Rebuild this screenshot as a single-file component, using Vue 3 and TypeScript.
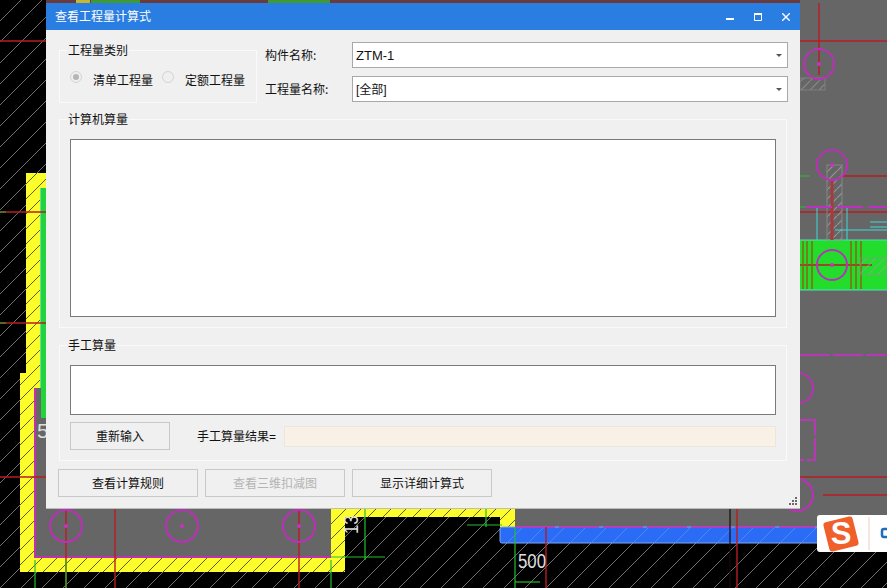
<template>
  <div class="screen">
    <svg class="cad" width="887" height="588" viewBox="0 0 887 588">
      <defs>
        <pattern id="hatch" width="21" height="21" patternUnits="userSpaceOnUse">
          <path d="M-2 23 L23 -2 M-2 2 L2 -2 M19 23 L23 19" stroke="#8c8c8c" stroke-width="0.8" />
        </pattern>
        <pattern id="wallHatch" width="15" height="15" patternUnits="userSpaceOnUse">
          <path d="M-2 17 L17 -2" stroke="#5f5d18" stroke-width="1" />
        </pattern>
        <pattern id="greyHatch" width="9" height="9" patternUnits="userSpaceOnUse">
          <path d="M-2 11 L11 -2" stroke="#a0a0a0" stroke-width="1.2" />
        </pattern>
        <pattern id="blueHatch" width="21" height="21" patternUnits="userSpaceOnUse">
          <path d="M-2 23 L23 -2" stroke="#5a8cf0" stroke-width="0.8" />
        </pattern>
      </defs>

      <rect width="887" height="588" fill="#000" />
      <rect width="887" height="588" fill="url(#hatch)" />

      <!-- grey floor areas -->
      <rect x="35" y="388" width="300" height="170" fill="#666" />
      <rect x="515" y="500" width="372" height="28" fill="#666" />
      <rect x="790" y="0" width="97" height="528" fill="#666" />

      <!-- top strip above the dialog -->
      <rect x="46" y="0" width="754" height="3" fill="#6b3a3a" />
      <rect x="76" y="0" width="14" height="3" fill="#c8b830" />
      <rect x="91" y="0" width="49" height="3" fill="#3f9a34" />
      <rect x="268" y="0" width="62" height="3" fill="#3f9a34" />

      <!-- yellow walls -->
      <path
        v-for="wall in walls"
        :key="wall"
        :d="wall"
        fill="#fdfd2c"
      />
      <path v-for="wall in walls" :key="wall + 'h'" :d="wall" fill="url(#wallHatch)" />
      <path d="M35 388V557H331" fill="none" stroke="#c030b0" stroke-width="2" />

      <!-- green and blue blocks -->
      <rect x="41" y="188" width="9" height="230" fill="#22d43a" />
      <path d="M40.5 188V388" stroke="#60e0a0" />
      <rect x="800" y="240" width="87" height="50" fill="#22dd2c" />
      <path d="M800 240H887M800 290H887" stroke="#4de0c0" />
      <rect x="500" y="527" width="330" height="16" rx="2" fill="#2a6cf5" stroke="#7fa8f0" />
      <rect x="501" y="528" width="328" height="14" fill="url(#blueHatch)" />
      <path d="M515 527H815" stroke="#b040c0" stroke-width="2" stroke-dasharray="40 4" />

      <!-- axis lines -->
      <path
        v-for="line in redLines"
        :key="line"
        :d="line"
        fill="none"
        stroke="#b81c24"
        stroke-width="1.4"
      />
      <path
        v-for="line in greenLines"
        :key="line"
        :d="line"
        fill="none"
        stroke="#22c02c"
        stroke-width="1.2"
      />
      <path d="M730 508V588" stroke="#1a0a0a" stroke-width="1.2" />
      <rect x="827" y="165" width="15" height="75" fill="url(#greyHatch)" stroke="#909090" opacity="0.8" />
      <path d="M832 180V240" stroke="#a83a3a" stroke-width="3" />
      <path d="M817 206V240M847 206V240M835 230H887M870 222H887M870 227H887" stroke="#3cd8d8" stroke-width="1" fill="none" />
      <path d="M806 207H887" stroke="#c030c0" stroke-width="2" stroke-dasharray="26 5" />
      <path d="M803 241V289M807 241V289M812 241V289M851 241V289M856 241V289M861 241V289" stroke="#8f5f10" stroke-width="1.4" />
      <rect x="800" y="78" width="25" height="12" fill="url(#greyHatch)" stroke="#909090" opacity="0.6" />
      <rect x="860" y="258" width="27" height="17" fill="url(#greyHatch)" stroke="#909090" opacity="0.6" />

      <!-- column circles -->
      <g v-for="c in columns" :key="c.x + '-' + c.y">
        <circle :cx="c.x" :cy="c.y" :r="c.r" fill="none" stroke="#bb30b8" stroke-width="2" />
        <circle :cx="c.x" :cy="c.y" r="2" fill="#cc30c0" />
      </g>
      <path d="M800 355H887M800 420H815V460H800" fill="none" stroke="#b838b8" stroke-width="2" stroke-dasharray="30 3" />

      <!-- dimensions -->
      <text class="dim" transform="translate(358 534) rotate(-90) scale(0.8 1)">13</text>
      <text class="dim" transform="translate(518 568) scale(0.8 1)">500</text>
      <text class="dim" x="37" y="438">5</text>

      <!-- input method badge -->
      <rect x="817" y="515" width="80" height="37" rx="3" fill="#fff" />
      <rect x="826" y="519" width="30" height="30" rx="3" fill="#f0602a" transform="rotate(-14 841 534)" />
      <text class="sogou" x="841" y="544" text-anchor="middle">S</text>
      <path d="M869 517V550" stroke="#f6e6de" stroke-width="2" />
      <path d="M887 529H884Q882 529 882 531V535Q882 537 884 537H887" fill="none" stroke="#1c6cc0" stroke-width="2.5" />
    </svg>

    <section class="dialog">
      <header class="titlebar">
        <span class="title">查看工程量计算式</span>
        <div class="window-buttons">
          <svg width="8" height="8" viewBox="0 0 8 8"><rect y="5" width="8" height="2" fill="#fff" /></svg>
          <svg width="8" height="8" viewBox="0 0 8 8"><path d="M.5 1.5H7.5V7.5H.5Z" fill="none" stroke="#fff" /><rect width="8" height="2" fill="#fff" /></svg>
          <svg width="8" height="8" viewBox="0 0 8 8"><path d="M0 0L8 8M8 0L0 8" stroke="#fff" stroke-width="1.4" /></svg>
        </div>
      </header>

      <div class="body">
        <div class="top-row">
          <fieldset class="group type-group">
            <legend>工程量类别</legend>
            <div class="radios">
              <label v-for="item in quantityTypes" :key="item.name" class="radio">
                <span class="radio-mark" :class="{ checked: item.checked }"></span>
                <span>{{ item.name }}</span>
              </label>
            </div>
          </fieldset>
          <div class="combos">
            <div v-for="item in combos" :key="item.label" class="combo-row">
              <span class="combo-label">{{ item.label }}</span>
              <div class="combo">
                <span :class="{ 'combo-cjk': item.cjk }">{{ item.value }}</span>
                <i class="arrow"></i>
              </div>
            </div>
          </div>
        </div>

        <fieldset class="group computed-group">
          <legend>计算机算量</legend>
          <textarea class="computed-text"></textarea>
        </fieldset>

        <fieldset class="group manual-group">
          <legend>手工算量</legend>
          <textarea class="manual-text"></textarea>
          <div class="manual-row">
            <button class="btn retype" type="button">重新输入</button>
            <span class="result-label">手工算量结果=</span>
            <input class="result" type="text" readonly />
          </div>
        </fieldset>

        <div class="actions">
          <button class="btn action" type="button">查看计算规则</button>
          <button class="btn action" type="button" disabled>查看三维扣减图</button>
          <button class="btn action" type="button">显示详细计算式</button>
        </div>
      </div>

      <svg class="grip" width="10" height="10" viewBox="0 0 10 10">
        <path d="M7 1h2v2H7zM4 4h2v2H4zM7 4h2v2H7zM1 7h2v2H1zM4 7h2v2H4zM7 7h2v2H7z" fill="#6b6b6b" />
      </svg>
    </section>
  </div>
</template>

<script setup lang="ts">
const quantityTypes = [
  { name: '清单工程量', checked: true },
  { name: '定额工程量', checked: false },
]

const combos = [
  { label: '构件名称:', value: 'ZTM-1', cjk: false },
  { label: '工程量名称:', value: '[全部]', cjk: true },
]

const walls = [
  'M26 173H50V188H40V388H35V558H331V508H345V572H20V373H26Z',
  'M331 508H515V527H500V517H345V530H331Z',
]

const redLines = [
  'M0 212H46',
  'M0 323H46',
  'M0 477H46',
  'M0 41H46',
  'M800 41H887',
  'M819 3V75',
  'M842 176H887',
  'M800 212H887',
  'M800 265H872',
  'M800 477H887',
  'M823 495H887',
  'M66 508V588',
  'M115 508V588',
  'M299 508V588',
  'M737 508V588',
  'M546 527V588',
]

const greenLines = [
  'M35 560V588',
  'M66 560V588',
  'M331 560V588',
  'M515 527V588',
  'M365 508V560M331 557H385',
  'M467 525H502M486 508V527',
  'M515 582H540',
  'M800 176H810M800 207H806',
  'M0 212H6M0 323H6',
]

const columns = [
  { x: 66, y: 526, r: 16 },
  { x: 182, y: 526, r: 16 },
  { x: 299, y: 526, r: 16 },
  { x: 819, y: 64, r: 15 },
  { x: 832, y: 165, r: 15 },
  { x: 832, y: 265, r: 15 },
  { x: 798, y: 388, r: 15 },
  { x: 797, y: 495, r: 16 },
]
</script>

<style>
html,
body {
  margin: 0;
  background: #000;
}
</style>

<style scoped>
.screen {
  position: relative;
  width: 887px;
  height: 588px;
  overflow: hidden;
  font-family: "Noto Sans CJK SC", "Liberation Sans", sans-serif;
  font-size: 12px;
  color: #111;
}

.cad {
  position: absolute;
  inset: 0;
}

.dim {
  font-family: "Liberation Sans", sans-serif;
  font-size: 21px;
  fill: #dedede;
}

.sogou {
  font-family: "Liberation Sans", sans-serif;
  font-size: 31px;
  font-weight: 700;
  fill: #fff;
}

.dialog {
  position: absolute;
  left: 46px;
  top: 3px;
  width: 754px;
  height: 505px;
  background: #f0f0f0;
  box-shadow: 0 1px 0 #bdbdbd;
  display: flex;
  flex-direction: column;
}

.titlebar {
  height: 27px;
  flex-shrink: 0;
  background: #2a7de1;
  color: #fff;
  display: flex;
  align-items: center;
  justify-content: space-between;
  padding: 0 10px 0 9px;
}

.title {
  line-height: 25px;
  margin-bottom: 2px;
}

.window-buttons {
  display: flex;
  gap: 20px;
}

.window-buttons svg {
  display: block;
}

.body {
  flex: 1;
  padding: 12px 13px 0;
}

.top-row {
  display: flex;
  gap: 8px;
}

.group {
  margin: 0;
  padding: 0;
  min-width: 0;
  border: 1px solid #fafafa;
  box-sizing: border-box;
}

.group legend {
  margin-left: 7px;
  padding: 0 1px 1px;
  line-height: 15px;
  height: 15px;
  box-sizing: content-box;
}

.type-group {
  width: 198px;
  height: 61px;
}

.radios {
  display: flex;
  padding: 12px 0 0 10px;
  gap: 9px;
}

.radio {
  display: flex;
  align-items: center;
  gap: 11px;
  line-height: 20px;
}

.radio-mark {
  width: 12px;
  height: 12px;
  margin-top: -6px;
  border: 1px solid #d4d4d4;
  border-radius: 50%;
  box-sizing: border-box;
  background: #efefef;
  position: relative;
}

.radio-mark.checked::after {
  content: "";
  position: absolute;
  inset: 2px;
  border-radius: 50%;
  background: #b5b5b5;
}

.combos {
  flex: 1;
  display: flex;
  flex-direction: column;
  gap: 8px;
  margin-right: -1px;
}

.combo-row {
  display: flex;
  align-items: center;
}

.combo-label {
  width: 87px;
  flex-shrink: 0;
  padding-bottom: 2px;
}

.combo {
  flex: 1;
  height: 26px;
  box-sizing: border-box;
  border: 1px solid #a8a8a8;
  background: #fff;
  padding: 0 3px;
  display: flex;
  align-items: center;
  justify-content: space-between;
  font-family: "Liberation Sans", "Noto Sans CJK SC", sans-serif;
  font-size: 13px;
}

.combo-cjk {
  font-size: 12px;
  padding-bottom: 2px;
}

.arrow {
  width: 0;
  height: 0;
  margin-right: 2px;
  border-left: 3px solid transparent;
  border-right: 3px solid transparent;
  border-top: 3px solid #555;
}

.computed-group {
  margin-top: 8px;
  height: 217px;
  padding: 12px 10px 0;
}

.computed-group legend,
.manual-group legend {
  margin-left: -3px;
}

.computed-text,
.manual-text {
  display: block;
  width: 100%;
  box-sizing: border-box;
  margin: 0;
  border: 1px solid #7a7a7a;
  background: #fff;
  resize: none;
  outline: none;
}

.computed-text {
  height: 178px;
}

.manual-group {
  margin-top: 9px;
  height: 124px;
  padding: 12px 10px 0;
}

.manual-text {
  height: 50px;
}

.manual-row {
  display: flex;
  align-items: center;
  margin-top: 7px;
}

.btn {
  box-sizing: border-box;
  margin: 0;
  padding: 0 0 2px;
  height: 28px;
  border: 1px solid #c9c9c9;
  background: #f0f0f0;
  color: #111;
  font: inherit;
}

.btn:disabled {
  color: #b4b4b4;
}

.retype {
  width: 100px;
}

.result-label {
  margin-left: 27px;
  width: 87px;
  flex-shrink: 0;
  padding-bottom: 2px;
  font-family: "Liberation Sans", "Noto Sans CJK SC", sans-serif;
}

.result {
  flex: 1;
  min-width: 0;
  height: 21px;
  box-sizing: border-box;
  margin: 0;
  padding: 0;
  border: 1px solid #ece6dd;
  background: #f9f0e6;
  outline: none;
}

.actions {
  display: flex;
  gap: 7px;
  margin: 8px 0 0 -1px;
}

.action {
  width: 140px;
}

.grip {
  position: absolute;
  right: 2px;
  bottom: 2px;
}
</style>
